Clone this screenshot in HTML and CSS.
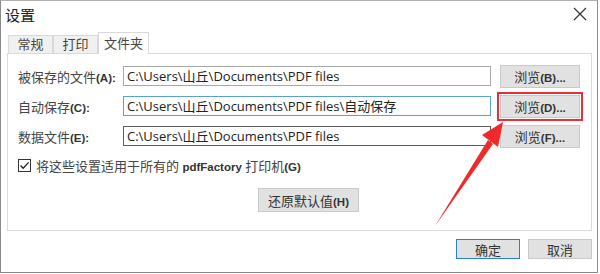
FILE: index.html
```html
<!DOCTYPE html>
<html lang="zh">
<head>
  <meta charset="UTF-8">
  <title>设置</title>
  <link rel="stylesheet" href="styles.css">
</head>
<body>
  <div class="window">
    <div class="titlebar">
      <span class="title">设置</span>
      <span class="close">
        <svg width="14" height="14" viewBox="0 0 14 14"><path d="M1 1L13 13M13 1L1 13" stroke="#333" stroke-width="1.2"/></svg>
      </span>
    </div>

    <div class="tabs">
      <div class="tab">常规</div>
      <div class="tab">打印</div>
      <div class="tab active">文件夹</div>
    </div>

    <div class="panel">
      <div class="row">
        <label class="lbl">被保存的文件<span class="key">(A):</span></label>
        <div class="field">C:\Users\山丘\Documents\PDF files</div>
        <button class="btn browse">浏览<span class="key">(B)...</span></button>
      </div>
      <div class="row">
        <label class="lbl">自动保存<span class="key">(C):</span></label>
        <div class="field focus">C:\Users\山丘\Documents\PDF files\自动保存</div>
        <button class="btn browse marked">浏览<span class="key">(D)...</span></button>
      </div>
      <div class="row">
        <label class="lbl">数据文件<span class="key">(E):</span></label>
        <div class="field dark">C:\Users\山丘\Documents\PDF files</div>
        <button class="btn browse">浏览<span class="key">(F)...</span></button>
      </div>

      <div class="check-row">
        <span class="checkbox">
          <svg width="11" height="11" viewBox="0 0 11 11"><path d="M1.5 5.5L4.2 8.3L9.6 2.4" fill="none" stroke="#222" stroke-width="1.3"/></svg>
        </span>
        <span>将这些设置适用于所有的 <span class="key">pdfFactory</span> 打印机<span class="key">(G)</span></span>
      </div>

      <div class="restore-row">
        <button class="btn restore">还原默认值<span class="key">(H)</span></button>
      </div>
    </div>

    <div class="footer">
      <button class="btn ok">确定</button>
      <button class="btn cancel">取消</button>
    </div>

    <svg class="arrow" width="600" height="274" viewBox="0 0 600 274">
      <polygon points="435,226 488,140 493,144" fill="#ee2a2a"/>
      <polygon points="503,122 482,135 498,147" fill="#ee2a2a"/>
    </svg>
  </div>
</body>
</html>
```

FILE: styles.css
```css
body {
  margin: 0;
  font-family: "Open Sans", "Noto Sans CJK SC", sans-serif;
  font-size: 13px;
  color: #333;
  background: #fff;
}

.window {
  position: relative;
  width: 596px;
  height: 271px;
  border: 1px solid #8a8a8a;
  border-top-color: #b0b0b0;
  background: #fff;
}

.titlebar {
  height: 30px;
  display: flex;
  align-items: center;
  justify-content: space-between;
  padding: 0 10px 0 4px;
}

.title {
  font-size: 15px;
  color: #222;
  margin-top: -4px;
}

.close {
  display: flex;
  margin-top: -4px;
}

.tabs {
  display: flex;
  align-items: flex-end;
  height: 22px;
  padding-left: 7px;
}

.tab {
  height: 18px;
  line-height: 17px;
  box-sizing: border-box;
  background: #f0f0f0;
  border: 1px solid #d9d9d9;
  border-bottom: none;
  color: #444;
  width: 45px;
  text-align: center;
  white-space: nowrap;
}

.tab.active {
  background: #fff;
  height: 22px;
  line-height: 20px;
  width: 51px;
  margin-bottom: -1px;
  position: relative;
  z-index: 1;
}

.panel {
  margin: 0 5px 0 6px;
  height: 178px;
  box-sizing: border-box;
  border: 1px solid #dadada;
  padding: 12px 11px 0 10px;
}

.row {
  display: flex;
  align-items: center;
  height: 20px;
  margin-bottom: 10px;
}

.lbl {
  width: 105px;
  flex: none;
  color: #444;
  white-space: nowrap;
}

.key {
  font-family: "Liberation Sans", sans-serif;
  font-size: 11.5px;
  font-weight: bold;
  color: #333;
}

.field {
  width: 368px;
  height: 20px;
  box-sizing: border-box;
  border: 1px solid #a8a8a8;
  padding-left: 3px;
  line-height: 18px;
  color: #222;
  white-space: nowrap;
  overflow: hidden;
  flex: none;
}

.field.focus {
  border-color: #5a9fd6;
}

.field.dark {
  border-color: #5c5c5c;
}

.btn {
  font-family: "Open Sans", "Noto Sans CJK SC", sans-serif;
  font-size: 13px;
  color: #333;
  background: #e1e1e1;
  border: 1px solid #c9c9c9;
  padding: 0;
  box-sizing: border-box;
}

.browse {
  width: 80px;
  height: 23px;
  margin-left: 9px;
  flex: none;
}

.marked {
  outline: 2px solid #e5303a;
  outline-offset: 1px;
}

.check-row {
  display: flex;
  align-items: center;
  gap: 5px;
  margin-top: 6px;
  color: #444;
}

.checkbox {
  width: 13px;
  height: 13px;
  box-sizing: border-box;
  border: 1px solid #333;
  display: flex;
  align-items: center;
  justify-content: center;
}

.restore-row {
  display: flex;
  padding-left: 240px;
  margin-top: 13px;
}

.restore {
  width: 101px;
  height: 24px;
}

.footer {
  display: flex;
  justify-content: flex-end;
  gap: 8px;
  padding: 8px 5px 0 0;
}

.ok,
.cancel {
  width: 64px;
  height: 20px;
}

.ok {
  border-color: #2a7fd4;
}

.arrow {
  position: absolute;
  left: -1px;
  top: -1px;
  pointer-events: none;
}
```
